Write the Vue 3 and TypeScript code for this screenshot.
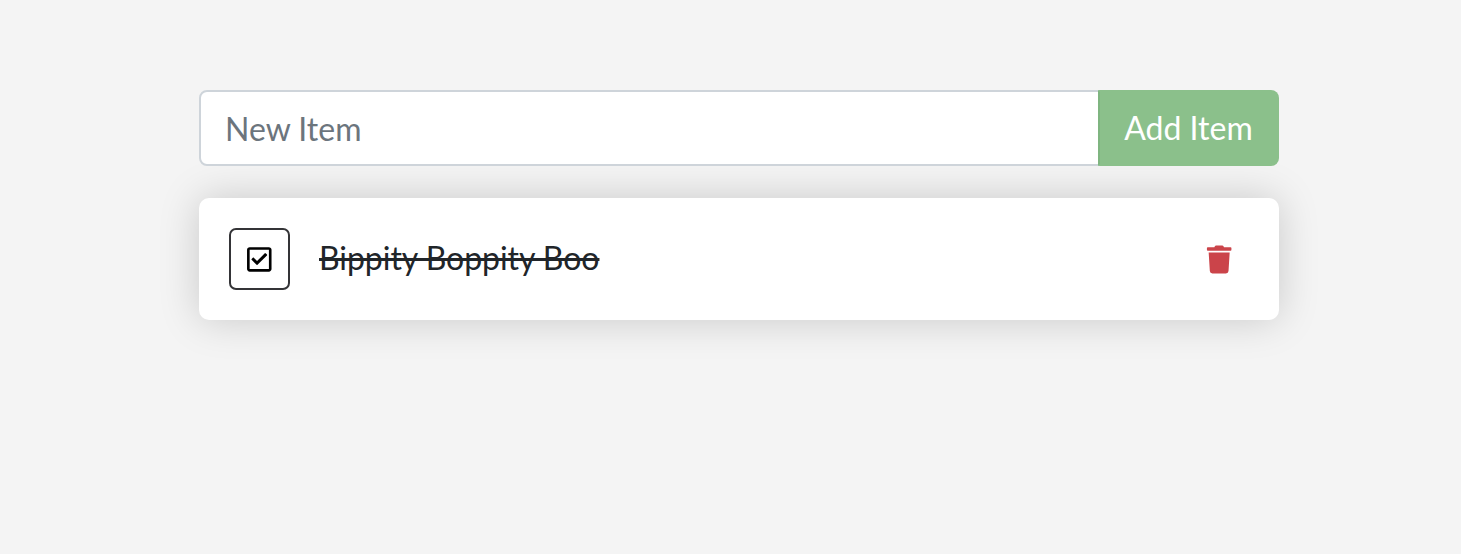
<script setup lang="ts">
import { ref } from 'vue'

interface Item {
  id: number
  name: string
  completed: boolean
}

const newItem = ref('')
const items = ref<Item[]>([{ id: 1, name: 'Bippity Boppity Boo', completed: true }])

function addItem() {
  const name = newItem.value.trim()
  if (!name) return
  items.value.push({ id: Date.now(), name, completed: false })
  newItem.value = ''
}

function removeItem(id: number) {
  items.value = items.value.filter((item) => item.id !== id)
}
</script>

<template>
  <main class="page">
    <form class="input-group" @submit.prevent="addItem">
      <input v-model="newItem" class="field" type="text" placeholder="New Item" />
      <button class="add" type="submit" :disabled="!newItem.length">Add Item</button>
    </form>
    <div v-for="item in items" :key="item.id" class="item">
      <button class="toggle" type="button" aria-label="Toggle item" @click="item.completed = !item.completed">
        <svg class="check" viewBox="4 -8 448 512">
          <path
            d="M400 32H48C21.490 32 0 53.490 0 80v352c0 26.510 21.490 48 48 48h352c26.510 0 48-21.490 48-48V80c0-26.510-21.490-48-48-48zm0 400H48V80h352v352z"
          />
          <path
            v-if="item.completed"
            d="M364.136 183.957L191.547 355.162c-4.705 4.667-12.303 4.637-16.970-.068l-90.781-91.516c-4.667-4.705-4.637-12.303.069-16.971l22.719-22.536c4.705-4.667 12.303-4.637 16.970.069l59.792 60.277 141.352-140.216c4.705-4.667 12.303-4.637 16.970.068l22.536 22.718c4.667 4.706 4.637 12.304-.068 16.970z"
          />
        </svg>
      </button>
      <span class="name" :class="{ done: item.completed }">{{ item.name }}</span>
      <button class="remove" type="button" aria-label="Remove item" @click="removeItem(item.id)">
        <svg class="trash" viewBox="6 -9 448 512">
          <path
            d="M432 32H312l-9.400-18.700A24 24 0 0 0 281.100 0H166.800a23.720 23.720 0 0 0-21.400 13.300L136 32H16A16 16 0 0 0 0 48v32a16 16 0 0 0 16 16h416a16 16 0 0 0 16-16V48a16 16 0 0 0-16-16zM53.200 467a48 48 0 0 0 47.900 45h245.800a48 48 0 0 0 47.900-45L416 128H32z"
          />
        </svg>
      </button>
    </div>
  </main>
</template>

<style>
body {
  margin: 0;
  background: #f4f4f4;
}
</style>

<style scoped>
.page {
  box-sizing: border-box;
  width: 1080px;
  min-height: 100vh;
  margin-left: 199px;
  padding-top: 90px;
  font-family: Lato, sans-serif;
  font-size: 32px;
  line-height: 1.5;
  color: #212529;
}

button,
input {
  box-sizing: border-box;
  margin: 0;
  font: inherit;
}

.input-group {
  display: flex;
  height: 76px;
  margin-bottom: 32px;
}

.field {
  flex: 1;
  min-width: 0;
  padding: 2px 24px 0;
  border: 2px solid #ced4da;
  border-radius: 8px 0 0 8px;
  background: #fff;
  outline: none;
}

.field::placeholder {
  color: #6c757d;
  opacity: 1;
}

.add {
  position: relative;
  width: 181px;
  margin-left: -2px;
  padding: 0;
  border: 2px solid #28a745;
  border-radius: 0 8px 8px 0;
  background: #198754;
  color: #fff;
}

.add:disabled {
  border-color: #8bc08b;
  border-left-color: #7fb580;
  background: #8bc08b;
}

.item {
  box-sizing: border-box;
  display: flex;
  align-items: center;
  height: 122px;
  padding: 0 30px;
  border-radius: 10px;
  background: #fff;
  box-shadow: 0 0 40px rgba(0, 0, 0, 0.175);
}

.toggle {
  display: flex;
  align-items: center;
  justify-content: center;
  width: 61px;
  height: 62px;
  padding: 0;
  border: 2px solid #343437;
  border-radius: 7px;
  background: none;
}

.check,
.trash {
  width: 25px;
  height: 28px;
  overflow: visible;
}

.check {
  fill: #000;
}

.trash {
  fill: #cb444a;
}

.name {
  flex: 1;
  margin-left: 29px;
  padding-bottom: 2px;
  letter-spacing: -0.04px;
}

.done {
  text-decoration: line-through;
  text-decoration-thickness: 3px;
}

.remove {
  display: flex;
  align-items: center;
  justify-content: center;
  width: 60px;
  height: 62px;
  padding: 0;
  border: 0;
  background: none;
}
</style>
